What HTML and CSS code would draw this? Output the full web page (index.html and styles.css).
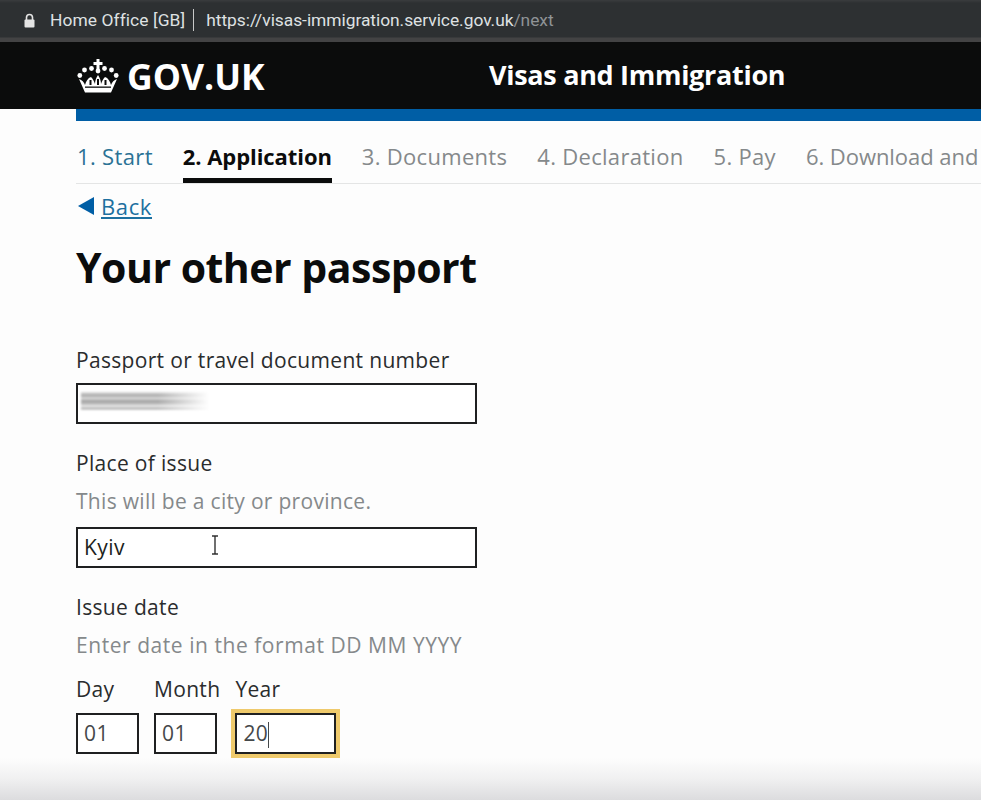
FILE: index.html
```html
<!DOCTYPE html>
<html lang="en">
<head>
    <meta charset="UTF-8">
    <meta name="viewport" content="width=device-width, initial-scale=1.0">
    <title>Your other passport - Visas and Immigration</title>
    <link rel="stylesheet" href="styles.css">
</head>
<body>

    <!-- Browser address bar -->
    <div class="browser-bar">
        <svg class="lock" width="13" height="15" viewBox="0 0 13 15">
            <path d="M3.5 7V4.5a3 3 0 0 1 6 0V7" fill="none" stroke="#e4e4e4" stroke-width="1.6"/>
            <rect x="1.5" y="6.5" width="10" height="8" rx="1" fill="#e4e4e4"/>
        </svg>
        <span class="owner">Home Office [GB]</span>
        <span class="divider"></span>
        <span class="url">https://visas-immigration.service.gov.uk<span class="url-path">/next</span></span>
    </div>

    <!-- Black header -->
    <header class="site-header">
        <div class="logo">
            <svg class="crown" width="42" height="34" viewBox="0 0 42 34">
                <g fill="#fff">
                    <rect x="19.500" y="0" width="3" height="10"/>
                    <rect x="16.500" y="3" width="9" height="3"/>
                    <circle cx="21" cy="12" r="2.400"/>
                    <circle cx="14.500" cy="9.500" r="2.400"/>
                    <circle cx="27.500" cy="9.500" r="2.400"/>
                    <circle cx="7.500" cy="11" r="2.400"/>
                    <circle cx="34.500" cy="11" r="2.400"/>
                    <circle cx="2.800" cy="16.500" r="2.400"/>
                    <circle cx="39.200" cy="16.500" r="2.400"/>
                    <path d="M2 20c3 1 5 3 6 6 1-4 3-7 6-8 2 2 3 4 4 7 0-3 1-6 3-9 2 3 3 6 3 9 1-3 2-5 4-7 3 1 5 4 6 8 1-3 3-5 6-6l-6 13.500H8z"/>
                </g>
                <g fill="#0b0c0c">
                    <rect x="8" y="27.500" width="26" height="1.300"/>
                    <rect x="12.500" y="21" width="2" height="5"/>
                    <rect x="20" y="20" width="2" height="6"/>
                    <rect x="27.500" y="21" width="2" height="5"/>
                </g>
            </svg>
            <span class="logo-text">GOV.UK</span>
        </div>
        <div class="service-name">Visas and Immigration</div>
    </header>

    <div class="page">
        <div class="blue-bar"></div>

        <!-- Steps -->
        <nav class="steps">
            <span class="step step-done">1. Start</span>
            <span class="step step-active">2. Application</span>
            <span class="step">3. Documents</span>
            <span class="step">4. Declaration</span>
            <span class="step">5. Pay</span>
            <span class="step step-last">6. Download and</span>
        </nav>

        <a class="back-link" href="#"><span class="back-arrow"></span><span class="back-text">Back</span></a>

        <h1>Your other passport</h1>

        <form class="form">
            <div class="field field-first">
                <label>Passport or travel document number</label>
                <div class="input"><span class="smudge"></span></div>
            </div>

            <div class="field">
                <label>Place of issue</label>
                <p class="hint">This will be a city or province.</p>
                <div class="input">Kyiv
                    <svg class="ibeam" width="10" height="20" viewBox="0 0 10 20">
                        <path d="M2 1h2.500L5 2l.5-1H8M5 2v16M2 19h2.500L5 18l.5 1H8" fill="none" stroke="#333" stroke-width="1.400"/>
                    </svg>
                </div>
            </div>

            <div class="field">
                <label>Issue date</label>
                <p class="hint hint-date">Enter date in the format DD MM YYYY</p>
                <div class="date-row">
                    <div class="date-part">
                        <label>Day</label>
                        <div class="input input-small">01</div>
                    </div>
                    <div class="date-part">
                        <label>Month</label>
                        <div class="input input-small">01</div>
                    </div>
                    <div class="date-part">
                        <label>Year</label>
                        <div class="input input-year">20<span class="caret"></span></div>
                    </div>
                </div>
            </div>
        </form>
    </div>

    <div class="bottom-fade"></div>

</body>
</html>
```

FILE: styles.css
```css
body {
    margin: 0;
    height: 800px;
    overflow: hidden;
    background: #fdfdfd;
    font-family: "Open Sans", "Liberation Sans", sans-serif;
    color: #1d1f20;
    position: relative;
}

/* Browser bar */
.browser-bar {
    height: 42px;
    box-sizing: border-box;
    background: linear-gradient(to bottom, #3a3c3e 0, #2d3032 3px, #2d3032 37px, #434344 38px);
    display: flex;
    align-items: center;
    padding: 0 0 2px 23px;
    font-family: "Roboto", sans-serif;
    font-size: 17.4px;
    color: #dfe1e2;
}

.lock {
    margin-right: 14px;
}

.owner {
    letter-spacing: 0.08px;
}

.divider {
    width: 1px;
    height: 22px;
    background: #c8c8c8;
    margin: 0 12px 0 8px;
}

.url {
    letter-spacing: -0.04px;
}

.url-path {
    color: #8f9396;
}

/* Header */
.site-header {
    height: 67px;
    background: #0b0c0c;
    color: #fff;
    display: flex;
    align-items: center;
    padding-left: 77px;
}

.logo {
    display: flex;
    align-items: center;
    width: 412px;
}

.crown {
    margin-right: 8px;
}

.logo-text {
    font-size: 35.5px;
    font-weight: 700;
}

.service-name {
    font-size: 27px;
    font-weight: 700;
    letter-spacing: -0.3px;
    margin-bottom: 2px;
}

/* Page */
.page {
    padding-left: 76px;
}

.blue-bar {
    height: 12px;
    background: #005ea5;
}

.steps {
    height: 63px;
    box-sizing: border-box;
    display: flex;
    gap: 30px;
    padding-left: 1px;
    border-bottom: 1px solid #e4e5e5;
    font-size: 22px;
    letter-spacing: 0.3px;
    white-space: nowrap;
    color: #85898b;
}

.step {
    padding-top: 20px;
}

.step-done {
    color: #2b7295;
    letter-spacing: 0.35px;
}

.step-active {
    color: #0b0c0c;
    font-weight: 700;
    letter-spacing: -0.07px;
    border-bottom: 5px solid #0b0c0c;
    height: 37px;
}

.step-last {
    letter-spacing: -0.05px;
}

.back-link {
    display: flex;
    align-items: center;
    margin-top: 7px;
    font-size: 22px;
    color: #1d70a0;
}

.back-arrow {
    width: 0;
    height: 0;
    border-top: 9px solid transparent;
    border-bottom: 9px solid transparent;
    border-right: 16px solid #005ea5;
    margin-left: 2px;
    margin-right: 7px;
}

.back-text {
    text-decoration: underline;
    letter-spacing: 0.6px;
}

h1 {
    margin: 21px 0 0;
    font-size: 41px;
    line-height: 50px;
    font-weight: 700;
    letter-spacing: -0.5px;
    color: #0b0c0c;
}

/* Form */
.form {
    width: 401px;
}

.field {
    margin-top: 25px;
}

.field-first {
    margin-top: 54px;
}

label {
    display: block;
    font-size: 21px;
    line-height: 28px;
    letter-spacing: 0.32px;
    color: #2a2c2d;
}

.hint {
    margin: 10px 0 12px;
    font-size: 21px;
    line-height: 28px;
    letter-spacing: 0.3px;
    color: #85898b;
}

.hint-date {
    letter-spacing: 0.55px;
}

.field-first label {
    margin-bottom: 9px;
}

.input {
    box-sizing: border-box;
    height: 41px;
    border: 2px solid #1f2021;
    background: #fff;
    padding-left: 6px;
    font-size: 21px;
    line-height: 37px;
    letter-spacing: 0.4px;
    position: relative;
}

.smudge {
    position: absolute;
    left: 3px;
    top: 7px;
    width: 128px;
    height: 18px;
    background:
        linear-gradient(to right, rgba(255, 255, 255, 0) 60%, #fff),
        linear-gradient(to bottom, #e4e4e4, #a8a8a8 20%, #e0e0e0 35%, #a0a0a0 50%, #bbbbbb 65%, #efefef 80%, #a8a8a8 92%, #eeeeee);
    filter: blur(1px);
}

.ibeam {
    position: absolute;
    left: 132px;
    top: 6px;
}

.date-row {
    display: flex;
    gap: 15px;
    margin-top: 16px;
}

.date-part label {
    margin-bottom: 10px;
}

.input-small {
    width: 63px;
    color: #45484a;
}

.input-year {
    width: 101px;
    color: #45484a;
    outline: 4px solid #efca6c;
}

.caret {
    display: inline-block;
    width: 1px;
    height: 26px;
    background: #45484a;
    vertical-align: middle;
}

.bottom-fade {
    position: absolute;
    left: 0;
    right: 0;
    bottom: 0;
    height: 42px;
    background: linear-gradient(to bottom, rgba(220, 220, 222, 0), rgba(220, 220, 222, 0.4) 50%, #dcdcde);
}
```
